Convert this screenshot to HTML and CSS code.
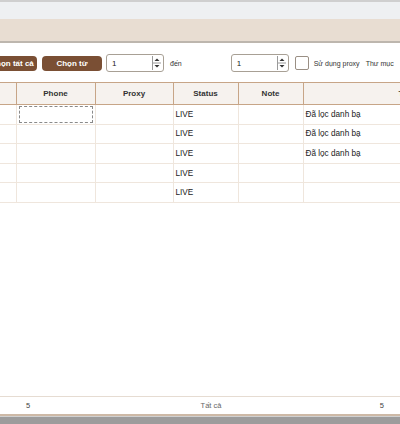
FILE: index.html
```html
<!DOCTYPE html>
<html lang="vi">
<head>
  <meta charset="UTF-8">
  <title>Danh sách tài khoản</title>
  <link rel="stylesheet" href="styles.css">
</head>
<body>
  <div class="app">
    <div class="titlebar"></div>
    <div class="tabbar"></div>

    <div class="toolbar">
      <button class="btn btn-all">Chọn tất cả</button>
      <button class="btn btn-from">Chọn từ</button>
      <div class="spin">
        <span class="spin-val">1</span>
        <span class="spin-arrows">
          <svg width="9" height="14" viewBox="0 0 9 14">
            <line x1="0.5" y1="0" x2="0.5" y2="14" stroke="#9a9a9a"/>
            <line x1="0.5" y1="7" x2="9" y2="7" stroke="#9a9a9a"/>
            <path d="M2.5 5 L5 2.5 L7.5 5 Z" fill="#333"/>
            <path d="M2.5 9 L5 11.5 L7.5 9 Z" fill="#333"/>
          </svg>
        </span>
      </div>
      <span class="lbl lbl-to">đến</span>
      <div class="spin spin-2">
        <span class="spin-val">1</span>
        <span class="spin-arrows">
          <svg width="9" height="14" viewBox="0 0 9 14">
            <line x1="0.5" y1="0" x2="0.5" y2="14" stroke="#9a9a9a"/>
            <line x1="0.5" y1="7" x2="9" y2="7" stroke="#9a9a9a"/>
            <path d="M2.5 5 L5 2.5 L7.5 5 Z" fill="#333"/>
            <path d="M2.5 9 L5 11.5 L7.5 9 Z" fill="#333"/>
          </svg>
        </span>
      </div>
      <span class="check"></span>
      <span class="lbl lbl-proxy">Sử dụng proxy</span>
      <span class="lbl lbl-dir">Thư mục</span>
    </div>

    <div class="grid">
      <table>
        <colgroup>
          <col class="c-first">
          <col class="c-phone">
          <col class="c-proxy">
          <col class="c-status">
          <col class="c-note">
          <col class="c-last">
        </colgroup>
        <thead>
          <tr>
            <th></th>
            <th>Phone</th>
            <th>Proxy</th>
            <th>Status</th>
            <th>Note</th>
            <th>Tình trạng</th>
          </tr>
        </thead>
        <tbody>
          <tr>
            <td></td>
            <td><span class="focus"></span></td>
            <td></td>
            <td>LIVE</td>
            <td></td>
            <td>Đã lọc danh bạ</td>
          </tr>
          <tr>
            <td></td><td></td><td></td><td>LIVE</td><td></td><td>Đã lọc danh bạ</td>
          </tr>
          <tr>
            <td></td><td></td><td></td><td>LIVE</td><td></td><td>Đã lọc danh bạ</td>
          </tr>
          <tr>
            <td></td><td></td><td></td><td>LIVE</td><td></td><td></td>
          </tr>
          <tr>
            <td></td><td></td><td></td><td>LIVE</td><td></td><td></td>
          </tr>
        </tbody>
      </table>
    </div>

    <div class="statusbar">
      <span class="st-left">5</span>
      <span class="st-mid">Tất cả</span>
      <span class="st-right">5</span>
    </div>
    <div class="bottombar"></div>
  </div>
</body>
</html>
```

FILE: styles.css
```css
* {
  box-sizing: border-box;
  margin: 0;
  padding: 0;
}

html,
body {
  width: 400px;
  height: 424px;
  overflow: hidden;
  background: #fff;
}

body {
  font-family: 'Liberation Sans', Arial, sans-serif;
  font-size: 8px;
  color: #222;
}

.app {
  display: flex;
  flex-direction: column;
  height: 424px;
}

.titlebar {
  height: 19px;
  background: #eef0f2;
  border-top: 2px solid #cfcfcf;
}

.tabbar {
  height: 24px;
  background: #e8ddd2;
  border-bottom: 2px solid #bdb6ae;
}

.toolbar {
  height: 39px;
  display: flex;
  align-items: center;
  margin-left: -13px;
  padding-top: 1px;
}

.btn {
  height: 15px;
  border: none;
  border-radius: 4px;
  background: #7a4f34;
  color: #fff;
  font-family: 'Liberation Sans', Arial, sans-serif;
  font-weight: bold;
  font-size: 8px;
  white-space: nowrap;
}

.btn-all {
  width: 50px;
  padding: 0;
}

.btn-from {
  width: 60px;
  margin-left: 5px;
}

.spin {
  width: 58px;
  height: 18px;
  margin-left: 4px;
  border: 1px solid #a8a095;
  border-radius: 3px;
  background: #fff;
  display: flex;
  align-items: center;
  justify-content: space-between;
  padding: 0 2px 0 5px;
}

.spin-val {
  font-size: 8px;
}

.spin-arrows {
  display: flex;
}

.lbl {
  font-size: 7px;
  color: #333;
  white-space: nowrap;
}

.lbl-to {
  margin-left: 6px;
}

.spin-2 {
  margin-left: 49px;
}

.check {
  width: 14px;
  height: 14px;
  margin-left: 6px;
  border: 1px solid #9a8f84;
  border-radius: 2px;
  background: #fff;
}

.lbl-proxy {
  margin-left: 5px;
}

.lbl-dir {
  margin-left: 6px;
}

.grid {
  flex: 1;
  overflow: hidden;
  border-bottom: 1px solid #e6dcd2;
}

table {
  border-collapse: collapse;
  table-layout: fixed;
  width: 533px;
}

.c-first {
  width: 16px;
}

.c-phone {
  width: 79px;
}

.c-proxy {
  width: 78px;
}

.c-status {
  width: 65px;
}

.c-note {
  width: 65px;
}

.c-last {
  width: 230px;
}

th {
  height: 22px;
  background: #f6f2ee;
  border-top: 1px solid #c7a587;
  border-bottom: 1px solid #c7a587;
  border-right: 1px solid #c7a587;
  font-family: 'Liberation Sans', Arial, sans-serif;
  font-size: 8px;
  font-weight: bold;
  color: #333;
  text-align: center;
  white-space: nowrap;
  overflow: hidden;
}

td {
  height: 19.6px;
  border-bottom: 1px solid #efe6dd;
  border-right: 1px solid #efe6dd;
  padding: 0 2px;
  font-size: 8.2px;
  color: #1a1a1a;
  white-space: nowrap;
  overflow: hidden;
}

.focus {
  display: block;
  height: 17px;
  border: 1px dashed #8a8a8a;
}

.statusbar {
  height: 19px;
  display: grid;
  grid-template-columns: 1fr 1fr 1fr;
  align-items: center;
  border-bottom: 2px solid #cdb9a6;
  font-size: 7.5px;
  color: #444;
}

.st-left {
  padding-left: 26px;
}

.st-mid {
  text-align: center;
  padding-left: 22px;
  color: #666;
}

.st-right {
  text-align: right;
  padding-right: 16px;
}

.bottombar {
  height: 8px;
  background: #9c9c9c;
  border-top: 1px solid #d0d0d0;
}
```
